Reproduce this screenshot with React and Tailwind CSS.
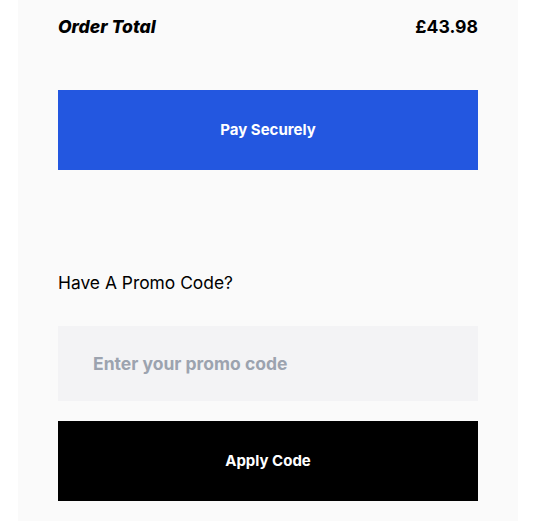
import React from 'react';

export default function App() {
  return (
    <div className="min-h-screen bg-white" style={{ fontFamily: 'Inter, "Noto Sans", sans-serif' }}>
      <div className="ml-[18px] w-[500px] bg-[#fafafa] px-10 pt-[15px] pb-8">
        {/* Total row */}
        <div className="flex items-center justify-between text-[17.6px] leading-6 font-bold text-black">
          <span className="italic font-extrabold">Order Total</span>
          <span>£43.98</span>
        </div>

        <button className="mt-[51px] flex h-20 w-full items-center justify-center bg-[#2357e0] text-[15px] font-bold text-white">
          Pay Securely
        </button>

        {/* Promo code */}
        <p className="mt-[101px] text-[17.4px] leading-6 text-black">Have A Promo Code?</p>

        <input
          type="text"
          placeholder="Enter your promo code"
          className="mt-[31px] block h-[75px] w-full bg-[#f3f3f5] pl-[35px] text-[17.5px] font-bold text-black outline-none placeholder:text-[#9ca3af]"
        />

        <button className="mt-5 flex h-20 w-full items-center justify-center bg-black text-[15px] font-bold text-white">
          Apply Code
        </button>
      </div>
    </div>
  );
}
